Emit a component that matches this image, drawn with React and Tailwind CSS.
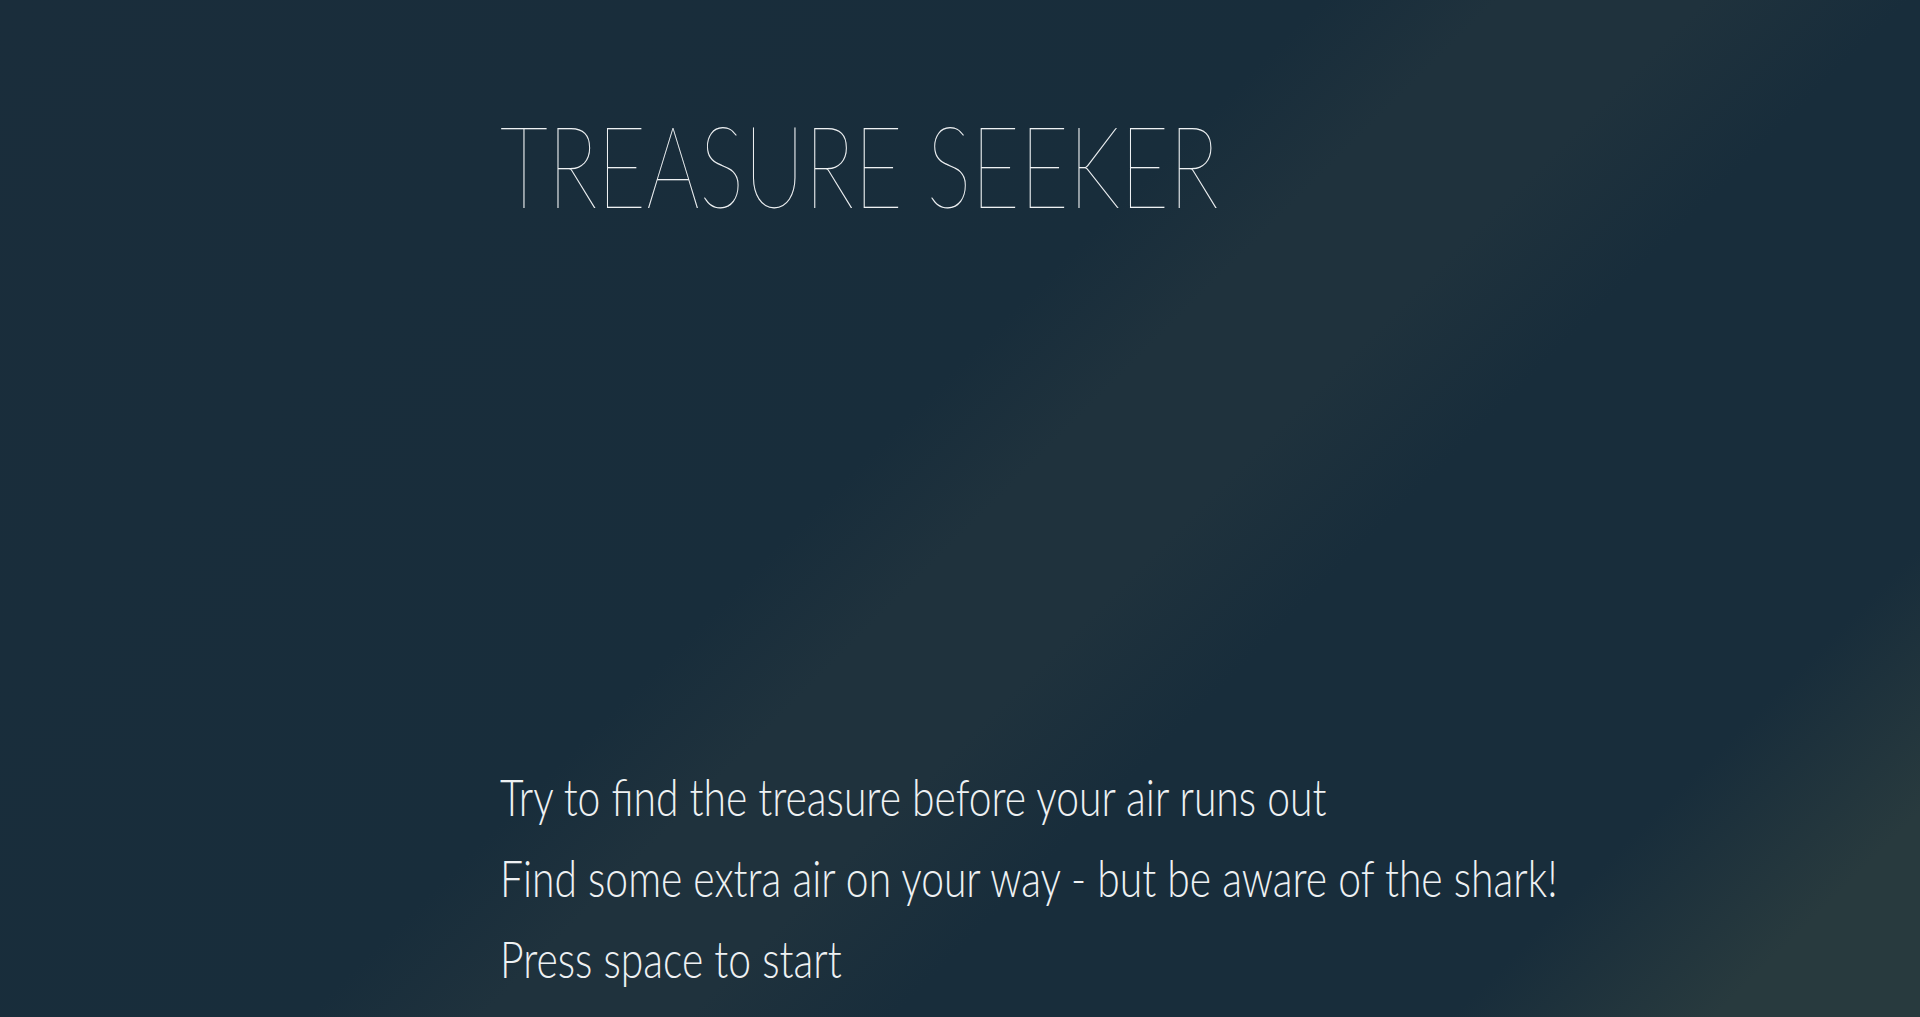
export default function App() {
  return (
    <div className="h-screen w-full overflow-hidden bg-[#1a2d3b] bg-[linear-gradient(135deg,#1a2d3b_0%,#182d3b_45%,#1f323d_51%,#1f323d_58%,#182d3b_65%,#182d3b_84%,#283a3e_93%,#283a3e_100%)] text-[#eef1f3] font-['Lato','Open_Sans',sans-serif]">
      <div className="flex h-full flex-col pl-[500px]">
        <h1 className="origin-left scale-x-[0.736] pt-[107px] text-[114px] font-thin leading-none whitespace-nowrap">TREASURE SEEKER</h1>
        <div className="mt-[535px] flex origin-left scale-x-[0.785] flex-col text-[52px] font-light leading-[81px] whitespace-nowrap">
          <p>Try to find the treasure before your air runs out</p>
          <p>Find some extra air on your way - but be aware of the shark!</p>
          <p>Press space to start</p>
        </div>
      </div>
    </div>
  );
}
